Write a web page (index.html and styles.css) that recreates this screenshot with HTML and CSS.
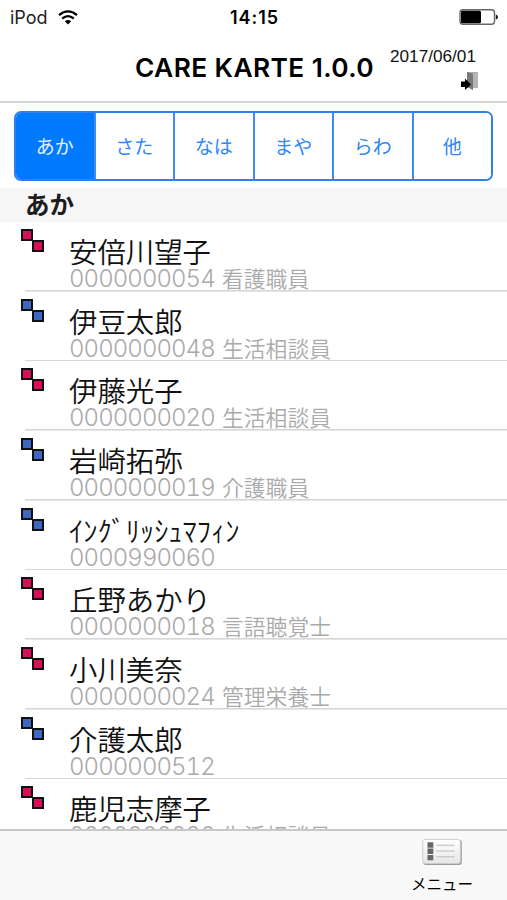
FILE: index.html
```html
<!DOCTYPE html>
<html lang="ja">
<head>
    <meta charset="UTF-8">
    <meta name="viewport" content="width=device-width, initial-scale=1.0">
    <title>CARE KARTE</title>
    <link rel="stylesheet" href="styles.css">
</head>
<body>
    <!-- Status bar -->
    <div class="status">
        <div class="carrier">
            <span>iPod</span>
            <svg width="20" height="15" viewBox="0 0 20 15" fill="none" stroke="#000" stroke-width="2.3">
                <path d="M1 5.2Q10 -2.4 19 5.2"/>
                <path d="M4.2 8.5Q10 3.7 15.8 8.5"/>
                <path d="M10 14.5L6.8 11.2Q10 8.8 13.2 11.2Z" fill="#000" stroke="none"/>
            </svg>
        </div>
        <span class="clock">14:15</span>
        <svg class="battery" width="40" height="18" viewBox="0 0 40 18">
            <rect x="1" y="1.7" width="34.5" height="14.6" rx="3" fill="#fff" stroke="#666" stroke-width="1.4"/>
            <rect x="2" y="2.7" width="20" height="12.6" rx="1.5" fill="#000"/>
            <path d="M36.8 6.5Q39 7 39 9T36.8 11.5Z" fill="#111"/>
        </svg>
    </div>

    <header>
        <h1>CARE KARTE 1.0.0</h1>
        <div class="info">
            <span class="date">2017/06/01</span>
            <svg class="exit" width="18" height="20" viewBox="0 0 18 20">
                <path d="M6 1H17V17H12V19L6 15Z" fill="#aaa"/>
                <path d="M6 1L12 3V19L6 16Z" fill="#777"/>
                <path d="M12 3L17 1V17H12Z" fill="#b5b5b5"/>
                <path d="M0 10.5H4V7.5L10 13.5L4 19V16H0Z" fill="#000"/>
            </svg>
        </div>
    </header>

    <!-- Kana tabs -->
    <nav class="tabs">
        <button class="active">あか</button>
        <button>さた</button>
        <button>なは</button>
        <button>まや</button>
        <button>らわ</button>
        <button>他</button>
    </nav>

    <main>
        <h2>あか</h2>
        <ul>
            <li>
                <div class="mark red"><i></i><i></i></div>
                <div class="person">
                    <div class="name">安倍川望子</div>
                    <div class="sub"><span class="num">0000000054</span>看護職員</div>
                </div>
            </li>
            <li>
                <div class="mark blue"><i></i><i></i></div>
                <div class="person">
                    <div class="name">伊豆太郎</div>
                    <div class="sub"><span class="num">0000000048</span>生活相談員</div>
                </div>
            </li>
            <li>
                <div class="mark red"><i></i><i></i></div>
                <div class="person">
                    <div class="name">伊藤光子</div>
                    <div class="sub"><span class="num">0000000020</span>生活相談員</div>
                </div>
            </li>
            <li>
                <div class="mark blue"><i></i><i></i></div>
                <div class="person">
                    <div class="name">岩崎拓弥</div>
                    <div class="sub"><span class="num">0000000019</span>介護職員</div>
                </div>
            </li>
            <li>
                <div class="mark blue"><i></i><i></i></div>
                <div class="person">
                    <div class="name">ｲﾝｸﾞﾘｯｼｭﾏﾌｨﾝ</div>
                    <div class="sub"><span class="num">0000990060</span></div>
                </div>
            </li>
            <li>
                <div class="mark red"><i></i><i></i></div>
                <div class="person">
                    <div class="name">丘野あかり</div>
                    <div class="sub"><span class="num">0000000018</span>言語聴覚士</div>
                </div>
            </li>
            <li>
                <div class="mark red"><i></i><i></i></div>
                <div class="person">
                    <div class="name">小川美奈</div>
                    <div class="sub"><span class="num">0000000024</span>管理栄養士</div>
                </div>
            </li>
            <li>
                <div class="mark blue"><i></i><i></i></div>
                <div class="person">
                    <div class="name">介護太郎</div>
                    <div class="sub"><span class="num">0000000512</span></div>
                </div>
            </li>
            <li>
                <div class="mark red"><i></i><i></i></div>
                <div class="person">
                    <div class="name">鹿児志摩子</div>
                    <div class="sub"><span class="num">0000000020</span>生活相談員</div>
                </div>
            </li>
        </ul>
    </main>

    <footer>
        <div class="menu">
            <svg width="42" height="29" viewBox="0 0 42 29">
                <defs>
                    <linearGradient id="card" x1="0" y1="0" x2="0" y2="1">
                        <stop offset="0" stop-color="#fff"/>
                        <stop offset="1" stop-color="#e6e6e6"/>
                    </linearGradient>
                </defs>
                <rect x="1.5" y="2" width="40" height="26" rx="2.5" fill="#999"/>
                <rect x="1" y="1.5" width="39" height="25" rx="2.5" fill="url(#card)" stroke="#ccc"/>
                <path d="M6 4.5h6v5.5h-6zM6 11h6v5.5h-6zM6 17.5h6v5.5h-6z" fill="#666"/>
                <path d="M15 7.5H34M15 13.5H34M15 19.5H34" stroke="#bbb"/>
            </svg>
            <span>メニュー</span>
        </div>
    </footer>
</body>
</html>
```
FILE: styles.css
```css
* {
    box-sizing: border-box;
}

body {
    margin: 0;
    height: 100vh;
    display: flex;
    flex-direction: column;
    overflow: hidden;
    background-color: #fff;
    color: #000;
    font-family: Inter, "Noto Sans CJK JP", sans-serif;
}

svg {
    display: block;
}

.status {
    flex: none;
    height: 34px;
    padding: 0 8px 0 10px;
    display: grid;
    grid-template-columns: 1fr auto 1fr;
    align-items: center;
    font-size: 18px;
}

.carrier {
    display: flex;
    align-items: center;
    gap: 10px;
    color: #222;
}

.clock {
    font-weight: 600;
    letter-spacing: 0.9px;
}

.battery {
    justify-self: end;
}

header {
    flex: none;
    height: 69px;
    padding: 0 27px 0 135px;
    display: flex;
    justify-content: space-between;
    border-bottom: 2px solid #d4d4d4;
}

h1 {
    margin: 0;
    line-height: 67px;
    font-size: 26.3px;
    letter-spacing: 0.4px;
    font-weight: 600;
    white-space: nowrap;
}

.info {
    display: flex;
    flex-direction: column;
    align-items: flex-end;
    padding-top: 12px;
}

.date {
    margin-right: 4px;
    font-family: "Liberation Sans", sans-serif;
    font-size: 17.2px;
    line-height: 21px;
    color: #111;
}

.exit {
    margin: 4px 1px 0 0;
}

.tabs {
    flex: none;
    display: flex;
    height: 70px;
    margin: 8px 14px 7px;
    border: 2px solid #2f80ed;
    border-radius: 7px;
    overflow: hidden;
}

.tabs button {
    flex: 1;
    padding: 0 0 2px;
    border: none;
    border-left: 2px solid #3f8cf3;
    background-color: #fff;
    color: #2f86f6;
    font-family: "Noto Sans CJK JP", sans-serif;
    font-size: 19px;
}

.tabs button:first-child {
    border-left: none;
}

.tabs .active {
    background-color: #007aff;
    color: #e4f1ff;
}

main {
    flex: 1;
    min-height: 0;
    overflow: hidden;
}

h2 {
    margin: 0;
    height: 34px;
    padding-left: 25px;
    background-color: #f6f6f6;
    color: #1c1c1c;
    font-size: 24.5px;
    line-height: 35px;
    font-weight: 600;
}

ul {
    margin: 0;
    padding: 0 0 0 21px;
    list-style: none;
}

li {
    display: flex;
    height: 69.67px;
    background: linear-gradient(#d6d6d6, #d6d6d6) 4px 100% / 100% 1.6px no-repeat;
}

.mark {
    width: 48px;
    padding-top: 7px;
}

.mark i {
    display: block;
    width: 12px;
    height: 12px;
    border: 2px solid #111;
    background-color: #d80f58;
}

.mark i + i {
    margin: -1px 0 0 11px;
}

.mark.blue i {
    background-color: #3f66c0;
}

.person {
    padding-top: 12px;
    font-family: "Noto Sans CJK JP", sans-serif;
    font-weight: 350;
    white-space: nowrap;
}

.name {
    font-size: 28.4px;
    line-height: 34px;
    color: #111;
}

.sub {
    display: flex;
    gap: 8px;
    font-size: 21.8px;
    line-height: 20px;
    color: #aaa;
}

.num {
    width: 145px;
    padding-top: 1px;
    font-family: Inter, sans-serif;
    font-weight: 300;
    font-size: 24px;
    letter-spacing: -0.95px;
    font-variant-numeric: tabular-nums;
}

footer {
    flex: none;
    height: 71px;
    padding-right: 34px;
    display: flex;
    justify-content: flex-end;
    border-top: 2px solid #c8c8c8;
    background-color: #f8f8f8;
}

.menu {
    display: flex;
    flex-direction: column;
    align-items: center;
    padding-top: 7px;
    font-family: "Noto Sans CJK JP", sans-serif;
    font-size: 15.5px;
    line-height: 34px;
}
```
